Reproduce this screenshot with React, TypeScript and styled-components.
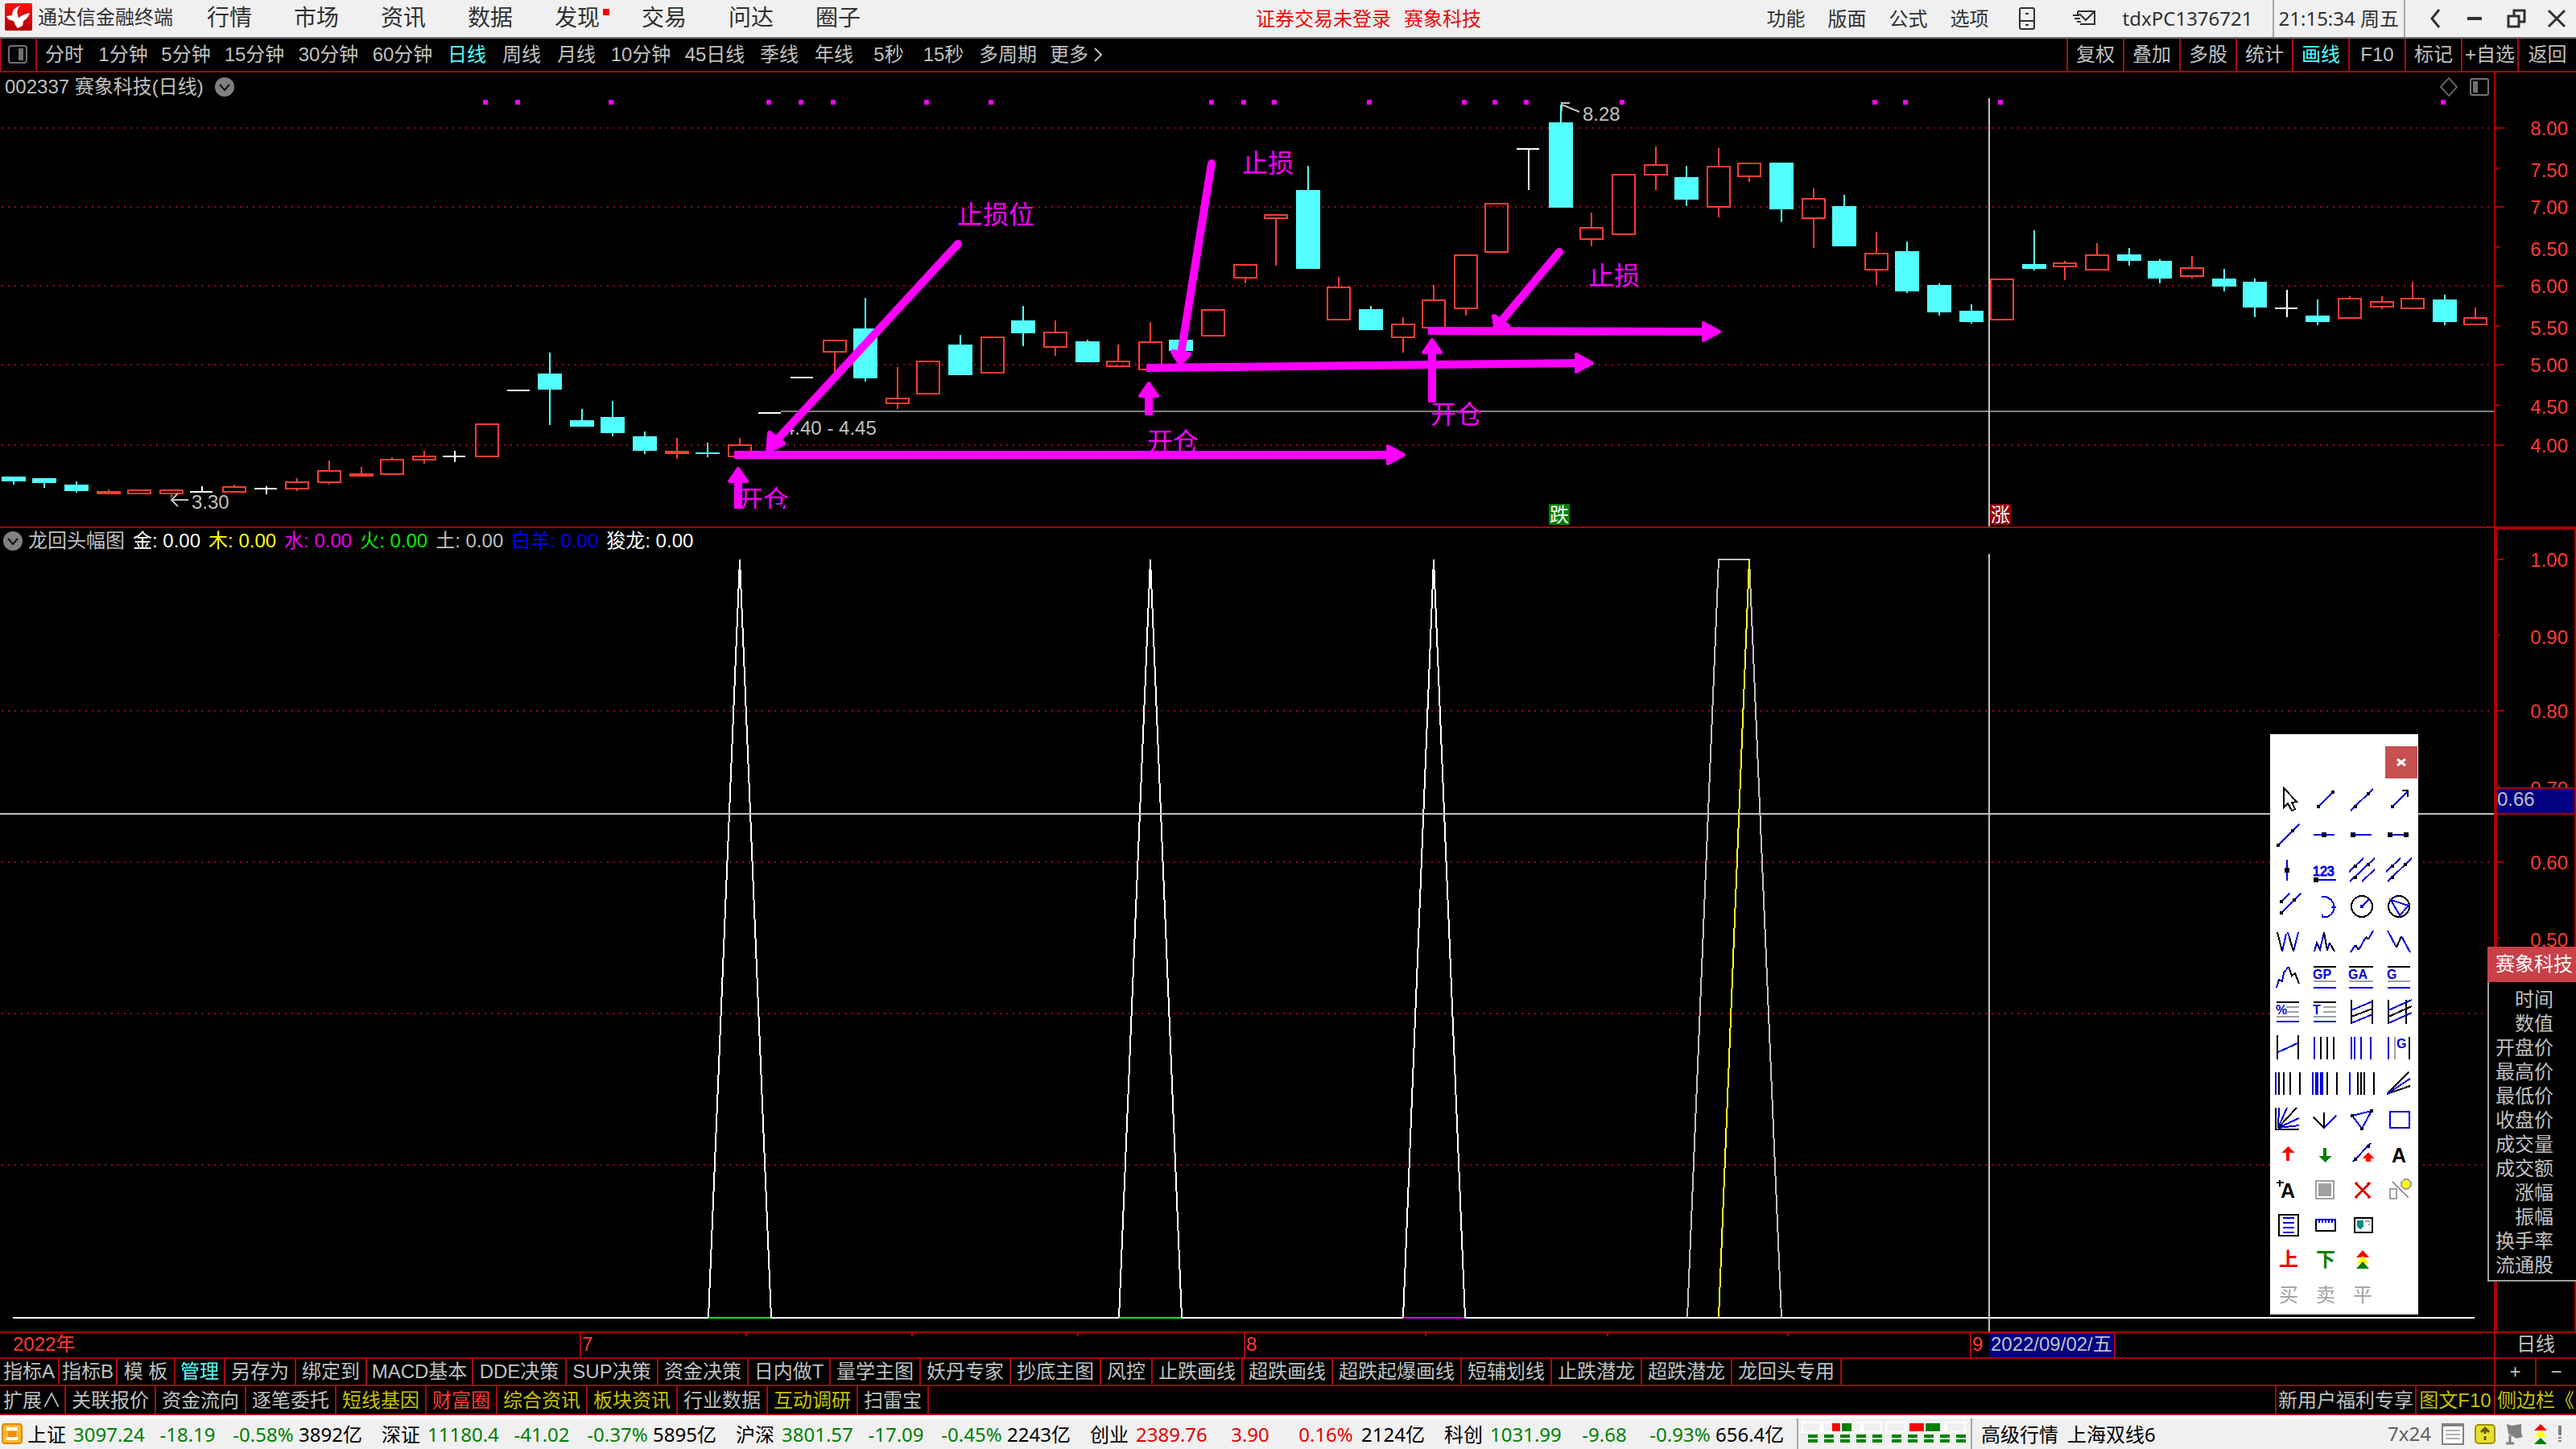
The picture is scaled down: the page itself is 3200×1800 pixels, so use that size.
import React from "react";
import styled, { createGlobalStyle } from "styled-components";

const SANS = '"Liberation Sans", "Noto Sans CJK SC", sans-serif';
const UI = '"Noto Sans", "Noto Sans CJK SC", sans-serif';
const RED = "#a00c10";
const LINE = "#a80000";
const TEXT = "#c0c0c0";
const CYAN = "#54ffff";
const UP = "#ff3c32";
const PINK = "#ff00ff";

const Global = createGlobalStyle`
  * { box-sizing: border-box; }
  html, body, #root { height: 100%; }
  body { margin: 0; background: #000; color: ${TEXT}; font-family: ${SANS}; font-size: 24px; line-height: 28px; overflow: hidden; }
  button { font: inherit; color: inherit; background: none; border: 0; padding: 0; margin: 0; white-space: nowrap; cursor: pointer; }
  svg { display: block; }
  svg text { font-family: ${SANS}; }
`;

const Screen = styled.div`
  display: flex;
  flex-direction: column;
  height: 100vh;
`;

/* ---------- title bar ---------- */

const TitleBar = styled.header`
  display: grid;
  grid-template-columns: 1560fr 280fr 1360fr;
  align-items: center;
  height: 48px;
  background: #f0f0f0;
  border-bottom: 2px solid #707070;
  color: #303030;
  font-family: ${UI};
  white-space: nowrap;
`;

const Brand = styled.div`
  display: flex;
  align-items: center;
  gap: 7px;
  padding: 0 0 4px 6px;
`;

const MenuList = styled.nav`
  display: flex;
  margin-left: 9px;
`;

const MenuItem = styled.button<{ $dot?: boolean }>`
  position: relative;
  width: 108px;
  font-size: 28px;
  line-height: 32px;
  &::after {
    content: "";
    display: ${(p) => (p.$dot ? "block" : "none")};
    position: absolute;
    top: 6px;
    right: 14px;
    width: 8px;
    height: 8px;
    background: #ff0000;
  }
`;

const Notice = styled.div`
  display: flex;
  gap: 16px;
  color: #e60c0c;
`;

const TitleRight = styled.div`
  display: flex;
  justify-content: flex-end;
  align-items: center;
  height: 46px;
`;

const SmallMenu = styled.button`
  width: 76px;
`;

const IconButton = styled.button<{ $w: number }>`
  display: flex;
  justify-content: center;
  align-items: center;
  width: ${(p) => p.$w}px;
  height: 44px;
`;

const User = styled.span`
  padding: 0 24px 0 10px;
`;

const Clock = styled.time`
  display: flex;
  align-items: center;
  height: 46px;
  margin-right: 14px;
  padding: 0 6px;
  border-left: 2px solid #a8a8a8;
  border-right: 2px solid #a8a8a8;
`;

/* ---------- period bar ---------- */

const PeriodBar = styled.nav`
  display: flex;
  height: 42px;
  border-bottom: 2px solid ${RED};
`;

const SideToggle = styled.button`
  display: flex;
  align-items: center;
  width: 46px;
  padding-left: 8px;
  border-left: 2px solid ${RED};
  border-right: 2px solid ${RED};
`;

const Period = styled.button<{ $w: number; $on?: boolean }>`
  width: ${(p) => p.$w}px;
  color: ${(p) => (p.$on ? CYAN : TEXT)};
`;

const Tools = styled.div`
  display: flex;
  margin-left: auto;
`;

const Tool = styled.button<{ $on?: boolean }>`
  width: 70px;
  border-left: 2px solid ${RED};
  color: ${(p) => (p.$on ? CYAN : TEXT)};
  &:last-child { width: 73px; }
`;

/* ---------- charts ---------- */

const Workspace = styled.main`
  position: relative;
  flex: 1;
  display: grid;
  grid-template-rows: 566fr 1000fr;
  min-height: 0;
`;

const Pane = styled.section`
  display: grid;
  grid-template-columns: 1fr 102px;
  grid-template-rows: minmax(0, 1fr);
  min-height: 0;
  border-bottom: 2px solid ${LINE};
`;

const Plot = styled.div`
  display: flex;
  flex-direction: column;
  min-width: 0;
  min-height: 0;
`;

const PaneHead = styled.div`
  display: flex;
  flex: none;
  align-items: center;
  height: 32px;
  padding: 4px 6px 0;
  white-space: nowrap;
`;

const StockHead = styled(PaneHead)`
  gap: 14px;
`;

const HeadIcons = styled.div`
  display: flex;
  gap: 14px;
  margin-left: auto;
`;

const IndicatorHead = styled(PaneHead)`
  padding: 0 4px;
  gap: 10px;
`;

const IndicatorName = styled.div`
  display: flex;
  align-items: center;
  gap: 7px;
`;

const Series = styled.span<{ $c: string }>`
  color: ${(p) => p.$c};
`;

const ChartSvg = styled.svg`
  flex: 1;
  width: 100%;
  min-height: 0;
`;

const Axis = styled.div<{ $boxed?: boolean }>`
  position: relative;
  min-height: 0;
  border-style: solid;
  border-color: ${LINE};
  border-width: ${(p) => (p.$boxed ? "2px 2px 0 4px" : "0 0 0 2px")};
`;

const AxisSvg = styled.svg`
  width: 100%;
  height: 100%;
`;

const CursorValue = styled.div`
  position: absolute;
  left: 0;
  right: 0;
  top: 320px;
  height: 34px;
  border-top: 2px solid ${LINE};
  border-bottom: 2px solid ${LINE};
  background: #000080;
  line-height: 26px;
`;

/* ---------- date axis ---------- */

const DateRow = styled.div`
  display: grid;
  grid-template-columns: 1fr 102px;
  height: 32px;
  border-bottom: 2px solid ${LINE};
`;

const Months = styled.div`
  position: relative;
  display: grid;
  grid-template-columns: 720fr 825fr 902fr 651fr;
  color: ${UP};
`;

const Month = styled.span`
  padding-left: 1px;
  border-left: 2px solid ${RED};
  &:first-child { padding-left: 14px; border-left-color: transparent; }
`;

const Ticks = styled.svg`
  position: absolute;
  inset: 0;
  width: 100%;
  height: 8px;
`;

const CursorDate = styled.div`
  position: absolute;
  top: 0;
  bottom: 0;
  left: 79.76%;
  padding: 0 2px;
  border-right: 2px solid ${RED};
  background: #000080;
  color: ${TEXT};
  white-space: nowrap;
`;

const PeriodCell = styled.div`
  border-left: 2px solid ${RED};
  text-align: center;
`;

/* ---------- bottom tabs ---------- */

const TabRow = styled.nav<{ $h: number }>`
  display: flex;
  height: ${(p) => p.$h}px;
  border-bottom: 2px solid ${LINE};
`;

const LinkRow = styled(TabRow)`
  & button { padding-top: 2px; }
`;

const Tab = styled.button<{ $w: number; $c?: string }>`
  width: ${(p) => p.$w}px;
  border-right: 2px solid ${RED};
  color: ${(p) => p.$c || TEXT};
`;

const TabsRight = styled.div`
  display: flex;
  margin-left: auto;
  & > button { border-right: 0; border-left: 2px solid ${RED}; }
`;

/* ---------- status bar ---------- */

const StatusBar = styled.footer`
  display: flex;
  align-items: center;
  height: 42px;
  border-top: 4px solid #fff;
  background: #f0f0f0;
  color: #000;
  font-family: ${UI};
  white-space: nowrap;
`;

const StatusIcon = styled.span`
  width: 34px;
  padding-left: 2px;
`;

const Quote = styled.div<{ $c: string }>`
  display: grid;
  grid-template-columns: 57px 92px 100px 88px 103px;
  padding-top: 2px;
  text-align: center;
  & > :nth-child(1), & > :nth-child(2), & > :nth-child(5) { text-align: left; }
  & > :nth-child(2), & > :nth-child(3), & > :nth-child(4) { color: ${(p) => p.$c}; }
`;

const Meter = styled.div`
  height: 38px;
  margin-left: -2px;
  padding: 4px 6px 0 4px;
  border-left: 2px solid #a8a8a8;
  border-right: 2px solid #a8a8a8;
`;

const Server = styled.div`
  display: flex;
  gap: 11px;
  padding: 2px 0 0 11px;
`;

const StatusTail = styled.div`
  display: flex;
  align-items: center;
  gap: 12px;
  margin-left: auto;
  padding-right: 16px;
  color: #606060;
`;

/* ---------- floating windows ---------- */

const Palette = styled.aside`
  position: absolute;
  top: 822px;
  right: 196px;
  width: 184px;
  background: #fff;
  border-bottom: 2px solid #e0e0e0;
`;

const PaletteTitle = styled.div`
  display: flex;
  justify-content: flex-end;
  height: 59px;
  padding: 15px 1px 4px;
`;

const Close = styled.button`
  display: flex;
  align-items: center;
  justify-content: center;
  width: 40px;
  height: 40px;
  background: #c75050;
`;

const PaletteGrid = styled.div`
  display: grid;
  grid-template-columns: repeat(4, 46px);
  grid-auto-rows: 44px;
`;

const GlyphTool = styled.button<{ $c: string; $bold?: boolean }>`
  color: ${(p) => p.$c};
  font-weight: ${(p) => (p.$bold ? 700 : 400)};
`;

const InfoWindow = styled.aside`
  position: absolute;
  top: 1086px;
  right: 0;
  width: 110px;
  background: #000;
  border-left: 2px solid #a0a0a0;
  border-bottom: 2px solid #a0a0a0;
  font-family: ${UI};
  white-space: nowrap;
`;

const InfoTitle = styled.h2`
  margin: 0 0 6px -2px;
  height: 44px;
  padding-left: 10px;
  background: #c84048;
  color: #fff;
  font-size: 24px;
  font-weight: 400;
  line-height: 42px;
`;

const InfoList = styled.ul`
  margin: 0;
  padding: 0 28px 4px 0;
  list-style: none;
  text-align: right;
  li { line-height: 30px; height: 30px; margin-left: -10px; }
`;

/* ---------- data ---------- */

type Kind = "u" | "d" | "r" | "w";
type Candle = [Kind, number, number, number, number];

// kind, high, body top, body bottom, low
const candles: Candle[] = [
  ["d", 592, 592, 598, 602], ["d", 594, 594, 600, 606], ["d", 598, 602, 610, 612], ["r", 608, 610, 614, 614],
  ["u", 608, 608, 614, 614], ["u", 608, 608, 614, 618], ["w", 604, 610, 612, 612], ["u", 602, 604, 612, 612],
  ["w", 604, 606, 608, 614], ["u", 594, 598, 608, 610], ["u", 572, 584, 600, 602], ["r", 580, 588, 592, 592],
  ["u", 568, 570, 590, 590], ["u", 560, 566, 572, 576], ["w", 560, 566, 568, 574], ["u", 526, 526, 568, 568],
  ["w", 484, 484, 486, 486], ["d", 438, 464, 484, 528], ["d", 508, 522, 530, 530], ["d", 498, 518, 538, 542],
  ["d", 536, 542, 560, 564], ["r", 544, 560, 564, 570], ["d", 550, 562, 564, 568], ["u", 544, 552, 568, 568],
  ["w", 512, 512, 514, 514], ["w", 468, 468, 470, 470], ["u", 422, 422, 438, 462], ["d", 370, 408, 470, 474],
  ["u", 456, 494, 502, 508], ["u", 448, 448, 490, 490], ["d", 416, 428, 466, 466], ["u", 418, 418, 464, 464],
  ["d", 380, 398, 414, 430], ["u", 398, 412, 432, 442], ["d", 422, 424, 450, 450], ["u", 428, 448, 456, 456],
  ["u", 400, 424, 460, 460], ["d", 422, 422, 436, 436], ["u", 384, 384, 418, 418], ["u", 328, 328, 346, 352],
  ["u", 266, 266, 272, 330], ["d", 206, 236, 334, 334], ["u", 344, 356, 398, 398], ["d", 380, 384, 410, 410],
  ["u", 394, 402, 420, 438], ["u", 354, 372, 408, 408], ["u", 316, 316, 384, 392], ["u", 252, 252, 314, 314],
  ["w", 184, 184, 186, 236], ["d", 130, 152, 258, 258], ["u", 264, 282, 298, 306], ["u", 216, 216, 292, 292],
  ["u", 182, 204, 218, 236], ["d", 206, 220, 248, 256], ["u", 184, 206, 258, 270], ["u", 202, 202, 220, 226],
  ["d", 202, 202, 260, 276], ["u", 234, 246, 272, 308], ["d", 242, 256, 306, 306], ["u", 288, 314, 336, 354],
  ["d", 300, 312, 362, 364], ["d", 352, 354, 388, 392], ["d", 378, 386, 400, 402], ["u", 346, 346, 398, 398],
  ["d", 286, 328, 334, 336], ["u", 324, 326, 332, 348], ["u", 302, 316, 336, 336], ["d", 308, 316, 324, 330],
  ["d", 322, 324, 346, 352], ["u", 318, 332, 344, 346], ["d", 334, 346, 356, 362], ["d", 346, 350, 382, 394],
  ["w", 360, 382, 384, 394], ["d", 372, 392, 400, 404], ["u", 368, 370, 396, 396], ["u", 368, 374, 382, 384],
  ["u", 350, 370, 384, 384], ["d", 366, 372, 400, 404], ["u", 382, 394, 404, 404],
];

const signals = [600, 640, 756, 952, 992, 1032, 1148, 1228, 1502, 1542, 1580, 1698, 1816, 1854, 1893, 2012, 2326, 2364, 2482, 3032];
const priceMarks: [string, number][] = [
  ["8.00", 159], ["7.50", 209], ["7.00", 257], ["6.50", 307], ["6.00", 355], ["5.50", 405], ["5.00", 453], ["4.50", 503], ["4.00", 553],
];
const levelMarks: [string, number][] = [
  ["1.00", 695], ["0.90", 789], ["0.80", 883], ["0.70", 977], ["0.60", 1071], ["0.50", 1165],
];

const periods: [string, number][] = [
  ["分时", 68], ["1分钟", 78], ["5分钟", 78], ["15分钟", 92], ["30分钟", 92], ["60分钟", 92], ["日线", 68], ["周线", 68],
  ["月线", 68], ["10分钟", 92], ["45日线", 92], ["季线", 68], ["年线", 68], ["5秒", 68], ["15秒", 68], ["多周期", 92], ["更多", 60],
];
const tools = ["复权", "叠加", "多股", "统计", "画线", "F10", "标记", "+自选", "返回"];

const series: [string, string][] = [
  ["金: 0.00", "#ffffff"], ["木: 0.00", "#ffff00"], ["水: 0.00", "#f000f0"], ["火: 0.00", "#00f000"],
  ["土: 0.00", TEXT], ["白羊: 0.00", "#0000ff"], ["狻龙: 0.00", "#ffffff"],
];

const tabs: [string, number][] = [
  ["指标A", 74], ["指标B", 72], ["模 板", 72], ["管理", 62], ["另存为", 88], ["绑定到", 88], ["MACD基本", 132], ["DDE决策", 116],
  ["SUP决策", 114], ["资金决策", 112], ["日内做T", 102], ["量学主图", 112], ["妖丹专家", 112], ["抄底主图", 112], ["风控", 64],
  ["止跌画线", 112], ["超跌画线", 112], ["超跌起爆画线", 160], ["短辅划线", 112], ["止跌潜龙", 112], ["超跌潜龙", 112], ["龙回头专用", 136],
];
const YELLOW = "#c8c000";
const links: [string, number, string?][] = [
  ["扩展∧", 82], ["关联报价", 112], ["资金流向", 112], ["逐笔委托", 112], ["短线基因", 112, YELLOW], ["财富圈", 88, UP],
  ["综合资讯", 112, YELLOW], ["板块资讯", 112, YELLOW], ["行业数据", 112], ["互动调研", 112, YELLOW], ["扫雷宝", 88],
];

const GREEN = "#008000";
const quotes: [string, string, string, string, string, string][] = [
  ["上证", "3097.24", "-18.19", "-0.58%", "3892亿", GREEN],
  ["深证", "11180.4", "-41.02", "-0.37%", "5895亿", GREEN],
  ["沪深", "3801.57", "-17.09", "-0.45%", "2243亿", GREEN],
  ["创业", "2389.76", "3.90", "0.16%", "2124亿", "#e60000"],
  ["科创", "1031.99", "-9.68", "-0.93%", "656.4亿", GREEN],
];

const infoRows = ["时间", "数值", "开盘价", "最高价", "最低价", "收盘价", "成交量", "成交额", "涨幅", "振幅", "换手率", "流通股"];

/* ---------- chart parts ---------- */

const candleX = (i: number) => Math.round((1.6 + 39.22 * i) / 2) * 2;

function CandleMark({ c, i }: { c: Candle; i: number }) {
  const [kind, high, top, bottom, low] = c;
  const x = candleX(i);
  const color = kind === "d" ? CYAN : kind === "w" ? "#fff" : UP;
  const mid = x + 14;
  const width = kind === "w" ? 28 : 30;
  return (
    <g fill={color}>
      {high < top && <rect x={mid} y={high} width="2" height={top - high} />}
      {low > bottom && <rect x={mid} y={bottom} width="2" height={low - bottom} />}
      {kind === "u" ? (
        <rect x={x + 1} y={top + 1} width="28" height={bottom - top - 2} fill="none" stroke={color} strokeWidth="2" />
      ) : (
        <rect x={x} y={top} width={width} height={bottom - top} />
      )}
    </g>
  );
}

function DottedLine({ y }: { y: number }) {
  return <line x1="2" x2="3098" y1={y} y2={y} stroke="#a00020" strokeWidth="2" strokeDasharray="2 6" />;
}

function HArrow({ x, y, to, head }: { x: number; y: number; to: number; head: number }) {
  return (
    <g fill={PINK} stroke={PINK}>
      <line x1={x} y1={y} x2={to - 12} y2={head} strokeWidth="10" />
      <path d={`M${to - 22} ${head - 11} L${to - 2} ${head} L${to - 22} ${head + 11} Z`} strokeWidth="4" strokeLinejoin="round" />
    </g>
  );
}

function VArrow({ x, y, to }: { x: number; y: number; to: number }) {
  return (
    <g fill={PINK} stroke={PINK}>
      <line x1={x} y1={y + 14} x2={x} y2={to} strokeWidth="10" />
      <path d={`M${x} ${y + 2} L${x + 11} ${y + 18} L${x - 11} ${y + 18} Z`} strokeWidth="4" strokeLinejoin="round" />
    </g>
  );
}

function PriceChart() {
  return (
    <ChartSvg viewBox="0 122 3098 532" preserveAspectRatio="xMinYMin meet">
      <defs>
        <clipPath id="entryClip">
          <rect x="900" y="600" width="120" height="32" />
          <rect x="1400" y="530" width="120" height="30" />
        </clipPath>
      </defs>
      <g shapeRendering="crispEdges">
        {priceMarks.filter((_, i) => i % 2 === 0).map(([k, y]) => <DottedLine key={k} y={y} />)}
        {signals.map((x) => <rect key={x} x={x} y="124" width="6" height="6" fill={PINK} />)}
        {candles.map((c, i) => <CandleMark key={i} c={c} i={i} />)}
        <rect x="970" y="510" width="2128" height="2" fill="#808080" />
        <rect x="2470" y="122" width="2" height="532" fill={TEXT} />
      </g>
      <g fill={TEXT} fontSize="24">
        <text x="238" y="632">3.30</text>
        <text x="974" y="540">4.40 - 4.45</text>
        <text x="1966" y="150">8.28</text>
      </g>
      <path d="M234 621 H213 M221 613 L213 621 L221 629 M1962 139 L1940 130 M1950 128 H1940 V138" fill="none" stroke={TEXT} strokeWidth="2" />
      <g stroke={PINK} strokeWidth="10" strokeLinecap="round">
        <path d="M1190 303 L960 552 M1505 203 L1466 446 M1937 313 L1864 400" />
        <path d="M954 560 L956 538 L973 551 Z M1466 452 L1457 437 L1477 440 Z M1858 407 L1856 393 L1873 405 Z" fill={PINK} strokeWidth="6" strokeLinejoin="round" />
      </g>
      <HArrow x={912} y={565} to={1746} head={565} />
      <HArrow x={1424} y={457} to={1980} head={451} />
      <HArrow x={1774} y={411} to={2138} head={412} />
      <VArrow x={917} y={580} to={632} />
      <VArrow x={1427} y={474} to={516} />
      <VArrow x={1779} y={420} to={500} />
      <g fill={PINK} fontSize="32">
        <text x="1189" y="278">止损位</text>
        <text x="1543" y="214">止损</text>
        <text x="1973" y="354">止损</text>
        <text x="916" y="632" clipPath="url(#entryClip)">开仓</text>
        <text x="1425" y="560" clipPath="url(#entryClip)">开仓</text>
        <text x="1777" y="526">开仓</text>
      </g>
      <rect x="1924" y="626" width="26" height="26" fill="#008000" />
      <rect x="2472" y="626" width="26" height="26" fill="#900000" />
      <g fill="#fff" fontSize="24">
        <text x="1925" y="648">跌</text>
        <text x="2473" y="648">涨</text>
      </g>
    </ChartSvg>
  );
}

const whiteCurve =
  "M16 1637 H880 L919 695 L958 1637 H1390 L1429 695 L1468 1637 H1743 L1781 695 L1820 1637 H3074";

function IndicatorChart() {
  return (
    <ChartSvg viewBox="0 688 3098 966" preserveAspectRatio="xMinYMin meet">
      <g shapeRendering="crispEdges" fill="none" strokeWidth="2">
        {[883, 1071, 1259, 1447].map((y) => <DottedLine key={y} y={y} />)}
        <path d={whiteCurve} stroke="#fff" />
        <path d="M2096 1637 L2135 695 H2173 L2213 1637" stroke="#c0c0c0" />
        <path d="M2135 1637 L2173 695" stroke="#ffff20" />
        <path d="M880 1637 H957 M1390 1637 H1467" stroke="#20e020" />
        <path d="M1743 1637 H1819" stroke="#e000e0" />
        <path d="M0 1011 H3098 M2471 688 V1654" stroke={TEXT} />
      </g>
    </ChartSvg>
  );
}

function ScaleMarks({ marks, x, tick }: { marks: [string, number][]; x: number; tick: number }) {
  return (
    <>
      {marks.map(([label, y], i) => (
        <g key={label}>
          <rect x="0" y={y - 1} width={i % 2 === 0 ? tick : tick / 2} height="2" fill={LINE} />
          <text x={x} y={y + (i % 2 ? 11 : 9)} fontSize="24" fill={UP} textAnchor="end">{label}</text>
        </g>
      ))}
    </>
  );
}

/* ---------- palette icons ---------- */

const B = "#0000e0";
const K = "#000";
const G = "#a0a0a0";

const P = ({ d, c = B, w = 2 }: { d: string; c?: string; w?: number }) => (
  <path d={d} stroke={c} strokeWidth={w} fill="none" />
);

const Dots = ({ at, s = 4 }: { at: [number, number][]; s?: number }) => (
  <>{at.map(([x, y]) => <rect key={`${x}-${y}`} x={x - s / 2} y={y - s / 2} width={s} height={s} fill={K} />)}</>
);

const Ratio = ({ t, x = 8 }: { t: string; x?: number }) => (
  <>
    <P c={K} d={`M${x} 10 H36`} />
    <text x={x - 1} y="25" fontSize="16" fontWeight="bold" fill={B}>{t}</text>
    <P c={G} d={`M${x} 28 H36`} />
    <P d={`M${x} 36 H36`} />
  </>
);

const Percent = ({ t }: { t: string }) => (
  <>
    <P c={K} d="M8 10 H36" />
    <text x="7" y="25" fontSize="16" fontWeight="bold" fill={B}>{t}</text>
    <P c={G} d="M20 16 H36 M20 22 H36 M8 28 H36" />
    <P d="M8 34 H36" />
  </>
);

type Drawn = [string, React.ReactNode];

const drawnTools: Drawn[] = [
  ["选择", <path d="M17 8 V32 L22 27 L27 36 L31 34 L27 26 L33 25 Z" stroke={K} strokeWidth="2" fill="#fff" />],
  ["线段", <><P d="M14 31 L32 13" /><Dots at={[[14, 31], [32, 13]]} /></>],
  ["直线", <><P d="M8 36 L36 9" /><Dots at={[[14, 31], [30, 15]]} /></>],
  ["箭头", <><P d="M14 31 L32 13" /><P c={K} d="M26 11 H33 V19" /><Dots at={[[14, 31]]} /></>],
  ["射线", <><P d="M10 35 L36 9" /><Dots at={[[10, 35], [28, 17]]} /></>],
  ["水平线", <><P d="M8 22 H34" /><Dots s={6} at={[[21, 22]]} /></>],
  ["水平射线", <><P d="M11 22 H34" /><Dots s={6} at={[[11, 22]]} /></>],
  ["水平线段", <><P d="M11 22 H31" /><Dots s={6} at={[[11, 22], [31, 22]]} /></>],
  ["垂直线", <><P d="M21 9 V35" /><Dots s={6} at={[[21, 22]]} /></>],
  ["价格标注", <><text x="7" y="29" fontSize="16" fill={B} stroke={B}>123</text><P d="M8 34 H36" /><Dots s={6} at={[[11, 34]]} /></>],
  ["平行线", <><P d="M6 24 L24 7 M7 36 L38 7 M22 36 L38 21" /><Dots at={[[14, 17], [30, 15], [14, 31]]} /></>],
  ["平行直线", <><P d="M6 24 L24 7 M8 36 L38 7" /><Dots at={[[14, 17], [30, 15], [14, 31]]} /></>],
  ["平行射线", <><P d="M14 17 L24 7 M14 31 L38 7" /><Dots at={[[14, 17], [30, 15], [14, 31]]} /></>],
  ["圆弧", <P d="M18 11 H24 L30 15 L33 20 V28 L30 33 L25 36 H18 M30 24 H36 M19 33 V36" />],
  ["圆", <><circle cx="22" cy="23" r="13" fill="none" stroke={K} strokeWidth="2" /><P d="M22 23 L31 14" /><rect x="20" y="21" width="4" height="4" fill={B} /></>],
  ["外接圆", <><circle cx="22" cy="23" r="13" fill="none" stroke={K} strokeWidth="2" /><P d="M12 15 L34 22 L23 34 Z" /></>],
  ["W形", <><P d="M9 11 L15 35 M22 11 L29 35" c={K} /><P d="M15 35 L20 13 M29 35 L35 11 M22 11 L24 18" /></>],
  ["头肩形", <><P d="M9 35 L12 24 L16 33 L21 11 M25 34 L28 24" /><P c={K} d="M12 24 L16 33 M21 11 L25 34 M28 24 L34 35" /></>],
  ["五浪线", <><P d="M8 36 L14 27 M18 33 L27 17 M30 20 L36 9" /><P c={K} d="M14 27 L18 33 M27 17 L30 20" /></>],
  ["三浪线", <><P d="M8 9 L19 30 M25 16 L36 36" /><P c={K} d="M19 30 L25 16" /></>],
  ["八浪线", <><P d="M8 36 L11 26 L15 28 L17 17 L23 10" /><P c={K} d="M11 26 L15 28 M23 10 L27 21 L31 18 L36 31" /></>],
  ["黄金价位", <Ratio t="GP" />],
  ["黄金目标", <Ratio t="GA" x={6} />],
  ["黄金分割", <Ratio t="G" />],
  ["百分比线", <Percent t="%" />],
  ["波段线", <Percent t="T" />],
  ["线性回归带", <><P c={K} d="M9 7 V37 M35 7 V37 M9 28 L35 18" /><P d="M9 20 L35 9 M9 36 L35 25" /></>],
  ["延长回归带", <><P c={K} d="M9 7 V37 M31 7 V37 M9 28 L38 15" /><P d="M9 20 L38 7 M9 36 L38 23" /></>],
  ["线性回归", <><P c={K} d="M9 7 V37 M35 7 V37" /><P d="M10 28 L34 17" /></>],
  ["周期线", <><P d="M9 9 V37" /><P c={K} d="M17 9 V37 M25 9 V37 M33 9 V37" /></>],
  ["费波拉契", <P d="M9 9 V37 M13 9 V37 M21 9 V37 M33 9 V37" />],
  ["时间黄金", <><P d="M9 9 V37" /><P c={G} d="M17 9 V37" /><P c={K} d="M35 9 V37" /><text x="19" y="23" fontSize="16" fontWeight="bold" fill={B}>G</text></>],
  ["自由周期", <><P d="M7 9 V37" /><P c={K} d="M11 9 V37 M17 9 V37 M25 9 V37 M37 9 V37" /></>],
  ["对称周期", <><P d="M7 9 V37" /><P w={4} d="M12 9 V37 M18 9 V37" /><P c={K} d="M25 9 V37 M37 9 V37" /></>],
  ["时间尺", <><P d="M7 9 V37" /><P c={K} d="M17 9 V37 M21 9 V37 M25 9 V37 M37 9 V37" /></>],
  ["阻速线", <><P c={K} d="M7 36 L34 9 M7 36 L36 26" /><P d="M7 36 L36 17" /></>],
  ["甘氏线", <><P d="M10 34 L11 9 M10 34 L21 9 M10 34 L36 22 M10 34 L36 31" /><P c={K} d="M10 34 L33 9 M7 9 V36 H36" /></>],
  ["分叉线", <><P c={K} d="M8 21 L21 34 M21 15 V35" /><P d="M21 34 L36 19" /></>],
  ["三角形", <><P d="M10 19 L34 13 L22 35 Z" /><Dots at={[[10, 19], [34, 13], [22, 35]]} /></>],
  ["矩形", <P d="M11 14 H35 V34 H11 Z" />],
  ["涨标记", <path d="M22 13 L30 21 H24 V31 H20 V21 H14 Z" fill="#f00" />],
  ["跌标记", <path d="M22 33 L30 25 H24 V15 H20 V25 H14 Z" fill={GREEN} />],
  ["预警线", <><P d="M11 32 L33 9" /><Dots at={[[14, 29], [30, 13]]} /><path d="M30 21 L38 28 H33 V32 H27 V28 H22 Z" fill="#f00" /></>],
  ["文字", <text x="22" y="33" textAnchor="middle" fontSize="25" fontWeight="bold" fill={K}>A</text>],
  ["加注", <><P c={K} d="M8 14 H17 M12 11 V19" /><text x="22" y="33" textAnchor="middle" fontSize="25" fontWeight="bold" fill={K}>A</text></>],
  ["截图", <><rect x="11" y="12" width="22" height="22" fill="none" stroke={G} strokeWidth="2" /><rect x="14" y="15" width="16" height="16" fill={G} /></>],
  ["删除", <P c="#e00000" w={3} d="M14 14 L32 33 M32 14 L14 33" />],
  ["隐藏", <><P c={G} d="M11 22 H19 V34 H11 Z M14 13 L34 33" /><circle cx="31" cy="16" r="6" fill="#ff0" stroke={G} strokeWidth="2" /></>],
  ["管理", <><P c={K} d="M11 10 H35 V36 H11 Z" /><P d="M16 14 H30 M16 20 H30 M16 26 H30 M16 32 H30" /></>],
  ["尺", <><P c={K} d="M11 16 V30 H35 V16" /><P d="M10 16 H36 M15 16 V20 M19 16 V20 M23 16 V20 M27 16 V20 M31 16 V20" /></>],
  ["图片", <><P c={K} d="M13 14 H35 V32 H13 Z" /><path d="M16 17 H24 V24 L20 29 L16 25 Z" fill="#009080" /><P c={G} d="M26 18 H32 M30 22 H32" /></>],
];

function Palettes() {
  return (
    <Palette aria-label="画线工具">
      <PaletteTitle>
        <Close aria-label="关闭">
          <svg width="12" height="12"><path d="M1 2 L11 10 M11 2 L1 10" stroke="#fff" strokeWidth="3" /></svg>
        </Close>
      </PaletteTitle>
      <PaletteGrid>
        {drawnTools.map(([name, art]) => (
          <button key={name} aria-label={name}>
            <svg width="46" height="44" shapeRendering="crispEdges">{art}</svg>
          </button>
        ))}
        <span />
        <GlyphTool $c="#f00000" $bold>上</GlyphTool>
        <GlyphTool $c={GREEN} $bold>下</GlyphTool>
        <button aria-label="涨跌标签">
          <svg width="46" height="44">
            <path d="M23 10 L31 19 H15 Z" fill="#f00" />
            <path d="M23 17 L31 26 H15 Z" fill="#ff0" />
            <path d="M23 24 L31 33 H15 Z" fill={GREEN} />
          </svg>
        </button>
        <span />
        <GlyphTool $c={G}>买</GlyphTool>
        <GlyphTool $c={G}>卖</GlyphTool>
        <GlyphTool $c={G}>平</GlyphTool>
      </PaletteGrid>
    </Palette>
  );
}

const Chevron = () => (
  <svg width="24" height="24" viewBox="0 0 24 24">
    <circle cx="12" cy="12" r="12" fill="#808080" />
    <path d="M6 9 L12 16 L18 9" fill="none" stroke="#101010" strokeWidth="2" />
  </svg>
);

function Meters() {
  const cells = [0, 1, 2, 3];
  const bars = [0, 1, 2, 3, 4];
  return (
    <svg width="204" height="30" shapeRendering="crispEdges">
      {[0, 104].map((x) => (
        <g key={x}>
          {cells.map((i) => <rect key={i} x={x + i * 25 + 1} y="1" width="23" height="12" fill="#f0f0f0" stroke="#fff" strokeWidth="2" />)}
          {bars.map((i) => (
            <path key={i} d={`M${x + 8 + i * 20} 18 h12 M${x + 8 + i * 20} 24 h12`} stroke={GREEN} strokeWidth="4" />
          ))}
        </g>
      ))}
      <rect x="38" y="2" width="10" height="10" fill="#f00" />
      <rect x="50" y="2" width="12" height="10" fill={GREEN} />
      <rect x="134" y="2" width="18" height="10" fill="#f00" />
      <rect x="154" y="2" width="18" height="10" fill={GREEN} />
    </svg>
  );
}

export default function App() {
  return (
    <Screen>
      <Global />
      <TitleBar>
        <Brand>
          <svg width="34" height="34" viewBox="0 0 34 34">
            <defs>
              <linearGradient id="logo" x1="0" y1="0" x2="0" y2="1">
                <stop offset="0" stopColor="#ff1010" />
                <stop offset="1" stopColor="#b00000" />
              </linearGradient>
            </defs>
            <rect width="34" height="34" rx="2" fill="url(#logo)" />
            <path d="M19 3 Q9 6 9 15 L2 16 Q3 21 11 22 Q12 27 16 31 L22 28 Q23 24 23 22 Q29 19 31 12 L24 14 Q20 16 17 18 Q13 10 19 3 Z" fill="#fff" />
          </svg>
          <span>通达信金融终端</span>
          <MenuList>
            {["行情", "市场", "资讯", "数据", "发现", "交易", "问达", "圈子"].map((m) => (
              <MenuItem key={m} $dot={m === "发现"}>{m}</MenuItem>
            ))}
          </MenuList>
        </Brand>
        <Notice><span>证券交易未登录</span><span>赛象科技</span></Notice>
        <TitleRight>
          {["功能", "版面", "公式", "选项"].map((m) => <SmallMenu key={m}>{m}</SmallMenu>)}
          <IconButton $w={66} aria-label="手机">
            <svg width="20" height="28" fill="none" stroke="#303030" strokeWidth="2">
              <rect x="1" y="1" width="18" height="26" rx="2" /><path d="M1 17 H19 M8 8 H12 M8 22 H12" />
            </svg>
          </IconButton>
          <IconButton $w={76} aria-label="消息">
            <svg width="30" height="22" fill="none" stroke="#303030" strokeWidth="2">
              <path d="M7 2 H28 V18 H10 M7 2 V6 M9 5 L17 13 L27 3 M1 7 H9 M3 11 H10 M6 15 H11" />
            </svg>
          </IconButton>
          <User>tdxPC1376721</User>
          <Clock>21:15:34 周五</Clock>
          <IconButton $w={46} aria-label="后退">
            <svg width="14" height="24"><path d="M12 1 L3 12 L12 23" fill="none" stroke="#303030" strokeWidth="3" /></svg>
          </IconButton>
          <IconButton $w={52} aria-label="最小化">
            <svg width="18" height="4"><rect width="18" height="4" fill="#303030" /></svg>
          </IconButton>
          <IconButton $w={52} aria-label="还原">
            <svg width="24" height="24" fill="none" stroke="#303030" strokeWidth="3"><path d="M2 9 H15 V22 H2 Z M9 9 V2 H22 V16 H15" /></svg>
          </IconButton>
          <IconButton $w={48} aria-label="关闭">
            <svg width="24" height="24"><path d="M2 2 L22 22 M22 2 L2 22" stroke="#303030" strokeWidth="3" /></svg>
          </IconButton>
        </TitleRight>
      </TitleBar>

      <PeriodBar>
        <SideToggle aria-label="侧栏">
          <svg width="24" height="24" fill="none"><rect x="1" y="1" width="22" height="21" rx="3" stroke="#707070" strokeWidth="2" /><rect x="13" y="4" width="6" height="15" fill="#707070" /></svg>
        </SideToggle>
        {periods.map(([label, w]) => <Period key={label} $w={w} $on={label === "日线"}>{label}</Period>)}
        <svg width="12" height="40"><path d="M2 12 L10 20 L2 28" fill="none" stroke={TEXT} strokeWidth="2" /></svg>
        <Tools>
          {tools.map((t) => <Tool key={t} $on={t === "画线"}>{t}</Tool>)}
        </Tools>
      </PeriodBar>

      <Workspace>
        <Pane>
          <Plot>
            <StockHead>
              <span>002337 赛象科技(日线)</span>
              <Chevron />
              <HeadIcons>
                <svg width="24" height="24"><path d="M12 1 L22 12 L12 23 L2 12 Z" fill="none" stroke="#606060" strokeWidth="2" /></svg>
                <svg width="24" height="24" fill="none"><rect x="1" y="2" width="22" height="20" rx="2" stroke="#707070" strokeWidth="2" /><rect x="4" y="5" width="6" height="14" fill="#707070" /></svg>
              </HeadIcons>
            </StockHead>
            <PriceChart />
          </Plot>
          <Axis>
            <AxisSvg viewBox="0 90 100 564" preserveAspectRatio="xMinYMin meet">
              <ScaleMarks marks={priceMarks} x={90} tick={10} />
            </AxisSvg>
          </Axis>
        </Pane>
        <Pane>
          <Plot>
            <IndicatorHead>
              <IndicatorName><Chevron /><span>龙回头幅图</span></IndicatorName>
              {series.map(([t, c]) => <Series key={t} $c={c}>{t}</Series>)}
            </IndicatorHead>
            <IndicatorChart />
          </Plot>
          <Axis $boxed>
            <AxisSvg viewBox="0 658 96 996" preserveAspectRatio="xMinYMin meet">
              <ScaleMarks marks={levelMarks} x={88} tick={8} />
            </AxisSvg>
            <CursorValue>0.66</CursorValue>
          </Axis>
        </Pane>
        <Palettes />
        <InfoWindow>
          <InfoTitle>赛象科技</InfoTitle>
          <InfoList>{infoRows.map((r) => <li key={r}>{r}</li>)}</InfoList>
        </InfoWindow>
      </Workspace>

      <DateRow>
        <Months>
          <Month>2022年</Month><Month>7</Month><Month>8</Month><Month>9</Month>
          <Ticks viewBox="0 0 3098 8" preserveAspectRatio="none">
            <path d="M927 0 V4 M1133 0 V4 M1339 0 V4 M1771 0 V4 M1997 0 V4 M2221 0 V4" stroke={RED} strokeWidth="2" />
          </Ticks>
          <CursorDate>2022/09/02/五</CursorDate>
        </Months>
        <PeriodCell>日线</PeriodCell>
      </DateRow>

      <TabRow $h={34}>
        {tabs.map(([label, w]) => <Tab key={label} $w={w} $c={label === "管理" ? CYAN : undefined}>{label}</Tab>)}
        <TabsRight>
          <Tab $w={51}>+</Tab>
          <Tab $w={51}>−</Tab>
        </TabsRight>
      </TabRow>
      <LinkRow $h={36}>
        {links.map(([label, w, c]) => <Tab key={label} $w={w} $c={c}>{label}</Tab>)}
        <TabsRight>
          <Tab $w={174}>新用户福利专享</Tab>
          <Tab $w={98} $c={YELLOW}>图文F10</Tab>
          <Tab $w={102} $c={YELLOW}>侧边栏《</Tab>
        </TabsRight>
      </LinkRow>

      <StatusBar>
        <StatusIcon>
          <svg width="26" height="26"><rect x="1" y="1" width="24" height="24" rx="3" fill="#ffb830" stroke="#e08a00" strokeWidth="2" /><path d="M6 7 H20 M6 19 H20" stroke="#fff" strokeWidth="4" /><rect x="8" y="10" width="10" height="7" fill="#f08c00" /></svg>
        </StatusIcon>
        {quotes.map(([name, price, change, pct, amount, color]) => (
          <Quote key={name} $c={color}>
            <span>{name}</span><span>{price}</span><span>{change}</span><span>{pct}</span><span>{amount}</span>
          </Quote>
        ))}
        <Meter><Meters /></Meter>
        <Server><span>高级行情</span><span>上海双线6</span></Server>
        <StatusTail>
          <span>7x24</span>
          <svg width="30" height="28"><rect x="2" y="2" width="26" height="25" fill="#fff" stroke="#808080" strokeWidth="2" /><path d="M2 3 H28" stroke="#808080" strokeWidth="4" /><path d="M6 10 H24 M6 15 H24 M6 20 H24" stroke="#b0b0b0" strokeWidth="2" /></svg>
          <svg width="26" height="28"><rect x="1" y="3" width="24" height="23" rx="4" fill="#e8e030" stroke="#a09000" strokeWidth="2" /><path d="M13 8 V14 M13 17 V22 M8 12 L13 7 L18 12" fill="none" stroke="#605800" strokeWidth="3" /></svg>
          <svg width="24" height="28"><path d="M2 2 L8 4 L20 2 V14 L22 18 L14 20 L4 14 Z" fill="#808080" /><path d="M6 16 V26 M1 26 H11" stroke="#808080" strokeWidth="3" /></svg>
          <svg width="16" height="28"><path d="M8 2 L16 10 H0 Z" fill="#f00" /><path d="M8 10 L16 18 H0 Z" fill="#ff0" /><path d="M8 19 L16 27 H0 Z" fill={GREEN} /></svg>
          <svg width="8" height="28"><path d="M4 4 V16 M4 18 V20 M4 22 V24" stroke="#808080" strokeWidth="4" /></svg>
        </StatusTail>
      </StatusBar>
    </Screen>
  );
}
